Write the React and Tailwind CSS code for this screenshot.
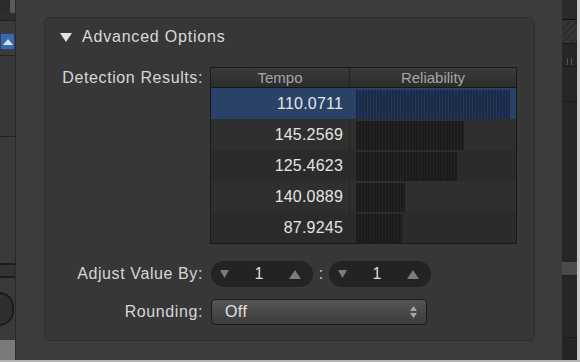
import React from "react";

const results = [
  { tempo: "110.0711", bar: 154, selected: true },
  { tempo: "145.2569", bar: 108 },
  { tempo: "125.4623", bar: 101 },
  { tempo: "140.0889", bar: 49 },
  { tempo: "87.9245", bar: 46 },
];

function Tri({ up, w = 10, h = 8, color = "#7c7c7c" }) {
  return (
    <svg width={w} height={h} viewBox={`0 0 ${w} ${h}`}>
      {up ? (
        <polygon points={`0,${h} ${w},${h} ${w / 2},0`} fill={color} />
      ) : (
        <polygon points={`0,0 ${w},0 ${w / 2},${h}`} fill={color} />
      )}
    </svg>
  );
}

function Stepper() {
  return (
    <div className="flex items-center justify-between w-[102px] h-[26px] rounded-full bg-[#232323] pl-[9px] pr-[12px]">
      <Tri w={9} h={8} />
      <span className="text-[16px] text-[#dedede] leading-none">1</span>
      <Tri up w={12} h={9} />
    </div>
  );
}

function LeftStrip() {
  return (
    <div className="w-[16px] flex flex-col bg-[#3a3a3a] border-r border-[#2a2a2a]">
      <div className="h-[13px] flex">
        <div className="w-[10px] bg-[#2c2c2c]" />
        <div className="flex-1 bg-[#5a5a5a] rounded-bl-[2px]" />
      </div>
      <div className="h-[7px] bg-[#2e2e2e]" />
      <div className="h-[1px] bg-[#1e1e1e]" />
      <div className="h-[12px]" />
      <div className="h-[17px] bg-[#3f68ab] border border-[#25406b] rounded-r-[2px] flex items-center justify-center">
        <Tri up w={10} h={6} color="#cfe0ff" />
      </div>
      <div className="h-[5px]" />
      <div className="h-[1px] bg-[#222]" />
      <div className="h-[80px] bg-[#383838]" />
      <div className="h-[1px] bg-[#222]" />
      <div className="h-[126px] bg-[#3a3a3a]" />
      <div className="h-[2px] bg-[#1c1c1c]" />
      <div className="h-[11px] bg-[#333]" />
      <div className="h-[2px] bg-[#1c1c1c]" />
      <div className="h-[62px] flex items-center">
        <div className="w-[30px] h-[34px] -ml-[16px] rounded-full bg-[#2f2f2f] border-2 border-[#1a1a1a]" />
      </div>
      <div className="flex-1 bg-[#7a7a7a]" />
    </div>
  );
}

function RightStrip() {
  return (
    <div className="w-[18px] flex">
      <div className="w-[15px] flex flex-col bg-[#262626]">
        <div className="h-[19px] bg-[#2a2a2a]" />
        <div className="h-[1px] bg-[#111]" />
        <div className="h-[23px] bg-[image:repeating-linear-gradient(135deg,#2e2e2e_0_3px,#363636_3px_5px)]" />
        <div className="h-[1px] bg-[#1a1a1a]" />
        <div className="h-[22px] flex items-end gap-[3px] pl-[5px] pb-[1px]">
          <div className="w-[1px] h-[7px] bg-[#555]" />
          <div className="w-[1px] h-[7px] bg-[#555]" />
        </div>
        <div className="h-[1px] bg-[#1a1a1a]" />
        <div className="h-[34px]" />
        <div className="h-[1px] bg-[#1c1c1c]" />
        <div className="h-[160px]" />
        <div className="h-[13px] bg-[#4a4a4a]" />
        <div className="h-[1px] bg-[#1e1e1e]" />
        <div className="flex-1" />
        <div className="h-[1px] bg-[#1c1c1c]" />
        <div className="h-[22px] bg-[#242424]" />
      </div>
      <div className="w-[3px] bg-[#c8c8c8]" />
    </div>
  );
}

export default function App() {
  return (
    <div
      className="w-[580px] h-[362px] flex flex-col bg-[#3b3b3b] overflow-hidden"
      style={{ fontFamily: '"Liberation Sans", Arial, sans-serif' }}
    >
      <div className="flex flex-1 min-h-0">
        <LeftStrip />

        {/* Dialog */}
        <div className="flex-1 bg-[#3c3c3c] pl-[28px] pr-[27px] pt-[17px] pb-[19px]">
          <div className="h-full rounded-[6px] bg-[#373737] border border-[#2d2d2d] pt-[9px]">
            {/* Header */}
            <div className="flex items-center h-[20px] pl-[15px]">
              <Tri w={12} h={9} color="#e2e2e2" />
              <span className="ml-[10px] text-[16px] tracking-[0.8px] text-[#dadada]">
                Advanced Options
              </span>
            </div>

            <div className="grid grid-cols-[158px_1fr] gap-x-[7px] mt-[20px] tracking-[0.6px]">
              {/* Detection results */}
              <div className="text-right text-[16px] leading-[21px] text-[#d6d6d6]">
                Detection Results:
              </div>
              <div className="w-[307px] border border-[#1a1a1a] bg-[#2d2d2d] tracking-normal">
                <div className="flex h-[20px] border-b border-[#181818] bg-gradient-to-b from-[#3a3a3a] to-[#2c2c2c] text-[15px] leading-[20px] text-[#a6a6a6]">
                  <div className="w-[139px] text-center border-r border-[#222]">Tempo</div>
                  <div className="flex-1 text-center">Reliability</div>
                </div>
                {results.map((r, i) => (
                  <div
                    key={r.tempo}
                    className={
                      "flex h-[31px] " +
                      (r.selected ? "bg-[#2a4268]" : i % 2 ? "bg-[#2f2f2f]" : "bg-[#2b2b2b]")
                    }
                  >
                    <div
                      className={
                        "w-[139px] text-right pr-[6px] text-[16px] tracking-[0.2px] leading-[31px] text-[#e4e4e4] border-r " +
                        (r.selected ? "border-[#2a4268]" : "border-[#262626]")
                      }
                    >
                      {r.tempo}
                    </div>
                    <div className="flex-1 pl-[6px] pt-[2px]">
                      <div
                        className={
                          "h-full " +
                          (r.selected
                            ? "bg-[image:repeating-linear-gradient(90deg,#1b2a44_0_2px,#24365a_2px_3px)]"
                            : "bg-[image:repeating-linear-gradient(90deg,#1b1b1b_0_2px,#242424_2px_3px)]")
                        }
                        style={{ width: r.bar }}
                      />
                    </div>
                  </div>
                ))}
              </div>

              {/* Adjust */}
              <div className="text-right text-[16px] leading-[26px] text-[#d6d6d6] mt-[17px]">
                Adjust Value By:
              </div>
              <div className="flex items-center mt-[17px] pl-[1px] tracking-normal">
                <Stepper />
                <span className="w-[16px] text-center text-[16px] text-[#d0d0d0]">:</span>
                <Stepper />
              </div>

              {/* Rounding */}
              <div className="text-right text-[16px] leading-[26px] text-[#d6d6d6] mt-[12px]">
                Rounding:
              </div>
              <div className="mt-[12px] pl-[1px] tracking-normal">
                <div className="flex items-center justify-between w-[216px] h-[26px] rounded-[4px] border border-[#1c1c1c] bg-gradient-to-b from-[#545454] to-[#3c3c3c] pl-[13px] pr-[9px]">
                  <span className="text-[16px] tracking-[0.4px] text-[#e2e2e2]">Off</span>
                  <div className="flex flex-col gap-[2px]">
                    <Tri up w={7} h={5} color="#a6a6a6" />
                    <Tri w={7} h={5} color="#a6a6a6" />
                  </div>
                </div>
              </div>
            </div>
          </div>
        </div>

        <RightStrip />
      </div>
      <div className="h-[2px] bg-[#b4b4b4]" />
    </div>
  );
}
